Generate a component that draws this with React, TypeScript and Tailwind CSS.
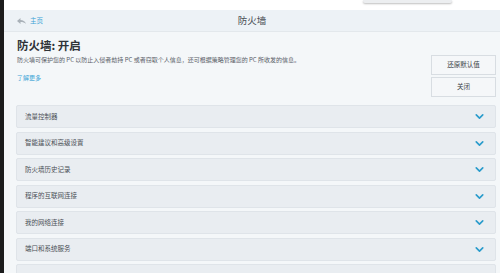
import { ChevronDown } from "lucide-react";

const sections = [
  "流量控制器",
  "智能建议和高级设置",
  "防火墙历史记录",
  "程序的互联网连接",
  "我的网络连接",
  "端口和系统服务",
  "",
];

function SectionRow({ label }: { label: string }) {
  return (
    <li className="flex h-[23px] shrink-0 items-center justify-between rounded-[2px] border border-[#dfe4e9] bg-[#e9edf1] pl-[8px] pr-[9px]">
      <span className="text-[6.5px] text-[#4a4f55]">{label}</span>
      <ChevronDown className="h-[13px] w-[13px] text-[#2a9ccc]" strokeWidth={3} />
    </li>
  );
}

export default function App() {
  return (
    <div
      className="relative flex h-[273px] w-[500px] overflow-hidden bg-[#f4f7f9]"
      style={{ fontFamily: '"Noto Sans CJK SC", "Noto Sans", sans-serif' }}
    >
      <div className="w-[4px] shrink-0 bg-[#1c1c1c]" />
      <div className="flex min-w-0 flex-1 flex-col">
        <div className="h-[10px] shrink-0 bg-white" />
        <header className="relative flex h-[22px] shrink-0 items-center border-b border-[#e3e8ec] bg-[#edf2f6] px-[13px]">
          <svg width="9" height="6" viewBox="0 0 9 6" className="text-[#a9b1b8]">
            <path d="M0 3 L3.5 0 V2 C6 2 8 3 9 6 C7.5 4.5 6 4 3.5 4 V6 Z" fill="currentColor" />
          </svg>
          <span className="ml-[4px] text-[6.5px] text-[#3aa3d6]">主页</span>
          <span className="absolute left-1/2 -translate-x-1/2 text-[9.5px] text-[#4a4f55]">防火墙</span>
        </header>

        <section className="flex h-[73px] shrink-0 justify-between pl-[13px] pr-[4px] pt-[4px]">
          <div>
            <h1 className="text-[11.5px] font-bold leading-[18px] text-[#2f3338]">防火墙: 开启</h1>
            <p className="mt-[1px] text-[6px] leading-[9px] text-[#5a6068]">
              防火墙可保护您的 PC 以防止入侵者劫持 PC 或者窃取个人信息，还可根据策略管理您的 PC 所收发的信息。
            </p>
            <a className="mt-[9px] block text-[6px] text-[#3aa3d6]">了解更多</a>
          </div>
          <div className="mt-[19px] flex w-[65px] flex-col gap-[2px]">
            <button className="h-[20px] border border-[#d8dde2] bg-[#f5f7f9] text-[6.5px] text-[#3a3f45]">
              还原默认值
            </button>
            <button className="h-[20px] border border-[#d8dde2] bg-[#f5f7f9] text-[6.5px] text-[#3a3f45]">
              关闭
            </button>
          </div>
        </section>

        <ul className="flex flex-col gap-[3.5px] pl-[12px] pr-[4px]">
          {sections.map((s, i) => (
            <SectionRow key={i} label={s} />
          ))}
        </ul>
      </div>

      <div className="absolute left-[363px] top-0 h-[3px] w-[89px] rounded-b-[2px] bg-[#eceef0] shadow-[0_1px_2px_rgba(0,0,0,0.25)]" />
    </div>
  );
}
